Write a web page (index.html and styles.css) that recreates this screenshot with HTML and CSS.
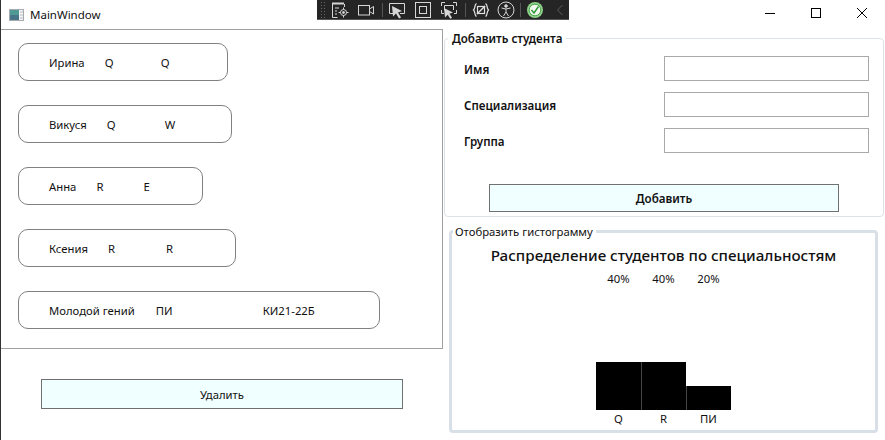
FILE: index.html
```html
<!DOCTYPE html>
<html lang="ru">
<head>
<meta charset="utf-8">
<title>MainWindow</title>
<link rel="stylesheet" href="styles.css">
</head>
<body>
<div class="window">
  <header class="titlebar">
    <div class="title-left">
      <svg class="app-icon" width="15" height="12" viewBox="0 0 15 12"><rect x="0.5" y="0.500" width="14" height="11" fill="#f4f5f6" stroke="#a6abb0"/><rect x="1" y="1" width="9" height="10" fill="#4f9a94"/><rect x="1" y="6" width="9" height="5" fill="#4a7488"/><path d="M11 3h3M11 6h3M11 9h3" stroke="#b5babe"/></svg>
      <span>MainWindow</span>
    </div>
    <div class="debug-bar">
      <span class="grip"></span>
      <svg class="ico m5" width="18" height="18" viewBox="0 0 18 18" fill="none" stroke="#d6d6d6"><path d="M1 2.500h12" stroke-width="2"/><path d="M1.500 3v13.500h5M4 7h4M4 10h2M4 13h2M13.500 3v3"/><circle cx="12.500" cy="11.500" r="3"/><circle cx="12.500" cy="11.500" r="1" fill="#d6d6d6"/><path d="M12.500 6.500v2M12.500 14.500v2M7.500 11.500h2M15.500 11.500h2"/></svg>
      <svg class="ico m8" width="18" height="18" viewBox="0 0 18 18" fill="none" stroke="#d6d6d6"><rect x="1.500" y="4.500" width="11" height="9.500"/><path d="M12.500 8l4-2.500v7.500l-4-2.500"/></svg>
      <span class="sep m7"></span>
      <svg class="ico m5" width="18" height="18" viewBox="0 0 18 18" fill="none" stroke="#d6d6d6"><path d="M5 12.500H1.500v-10h15v10H12"/><path d="M4 5l10 5-4 1.500 3 5-2 1-3-5-3 3z" fill="#d6d6d6" stroke="none"/></svg>
      <svg class="ico m8" width="18" height="18" viewBox="0 0 18 18" fill="none" stroke="#d6d6d6"><rect x="1.500" y="1.500" width="15" height="15"/><rect x="5.500" y="5.500" width="7" height="7"/></svg>
      <svg class="ico m8" width="18" height="18" viewBox="0 0 18 18" fill="none" stroke="#d6d6d6"><path d="M1.500 5V1.500H5M13 1.500h3.500V5M1.500 9v3.500H4M16.500 9v3.500H14M4.500 9V4.500h9V9"/><path d="M4 7l9 4.500-3.500 1.200 2.500 4-1.800 1-2.500-4-2.700 2.800z" fill="#d6d6d6" stroke="none"/></svg>
      <span class="sep m7"></span>
      <svg class="ico m6" width="18" height="18" viewBox="0 0 18 18" fill="none" stroke="#e0e0e0" stroke-width="1.200"><path d="M4.500 2.500C2 4 3.800 7 1.500 9 3.800 11 2 14 4.500 15.500"/><path d="M13.500 2.500C16 4 14.200 7 16.500 9 14.200 11 16 14 13.500 15.500"/><rect x="5.500" y="5.500" width="7" height="7"/><path d="M5 13l8-8" stroke-width="1.500"/></svg>
      <svg class="ico m7" width="18" height="18" viewBox="0 0 18 18" fill="none" stroke="#d6d6d6"><circle cx="9" cy="9" r="8"/><circle cx="9" cy="5" r="1.300" fill="#d6d6d6"/><path d="M4.500 7l4.500 1 4.500-1M9 8v3l-2.500 4M9 11l2.500 4"/></svg>
      <span class="sep m5"></span>
      <svg class="ico m5" width="18" height="18" viewBox="0 0 18 18"><circle cx="9" cy="9" r="8" fill="#8fd08a"/><circle cx="9" cy="9" r="5.800" fill="#f2f8f0" stroke="#4aa84a"/><path d="M5.500 9l2.500 3 4.500-6.500" fill="none" stroke="#2f9a38" stroke-width="1.500"/></svg>
      <svg class="chev" width="8" height="12" viewBox="0 0 8 12" fill="none" stroke="#5c5c5c"><path d="M6.500 1L1.500 6l5 5"/></svg>
    </div>
    <div class="caption">
      <svg class="cap" width="12" height="12" viewBox="0 0 12 12" stroke="#000" fill="none"><path d="M1 6.500h10"/></svg>
      <svg class="cap" width="12" height="12" viewBox="0 0 12 12" stroke="#000" fill="none"><rect x="1.500" y="1.500" width="9" height="9"/></svg>
      <svg class="cap" width="12" height="12" viewBox="0 0 12 12" stroke="#000" fill="none"><path d="M1 1l10 10M11 1L1 11"/></svg>
    </div>
  </header>
  <main class="content">
    <section class="left">
      <div class="list">
        <div class="student s1"><span class="c-name">Ирина</span><span class="c-spec">Q</span><span>Q</span></div>
        <div class="student s2"><span class="c-name">Викуся</span><span class="c-spec">Q</span><span>W</span></div>
        <div class="student s3"><span class="c-name">Анна</span><span class="c-spec">R</span><span>E</span></div>
        <div class="student s4"><span class="c-name">Ксения</span><span class="c-spec">R</span><span>R</span></div>
        <div class="student s5"><span class="c-name">Молодой гений</span><span class="c-spec">ПИ</span><span>КИ21-22Б</span></div>
      </div>
      <button class="btn delete" type="button">Удалить</button>
    </section>
    <section class="right">
      <fieldset class="add">
        <legend>Добавить студента</legend>
        <div class="row"><label>Имя</label><input type="text"></div>
        <div class="row"><label>Специализация</label><input type="text"></div>
        <div class="row"><label>Группа</label><input type="text"></div>
        <button class="btn add-btn" type="button">Добавить</button>
      </fieldset>
      <fieldset class="hist">
        <legend>Отобразить гистограмму</legend>
        <h2>Распределение студентов по специальностям</h2>
        <div class="pcts"><span>40%</span><span>40%</span><span>20%</span></div>
        <div class="bars">
          <div class="bar tall"></div><div class="bar tall"></div><div class="bar short"></div>
        </div>
        <div class="labels"><span>Q</span><span>R</span><span>ПИ</span></div>
      </fieldset>
    </section>
  </main>
</div>
</body>
</html>
```
FILE: styles.css
```css
* { box-sizing: border-box; }
html, body { margin: 0; padding: 0; background: #fff; }
body { width: 885px; height: 440px; overflow: hidden; font-family: "Noto Sans", "Open Sans", sans-serif; font-size: 11.3px; color: #111; }
.window { width: 885px; height: 440px; display: flex; flex-direction: column; border-left: 1px solid #333; }
.titlebar { height: 29px; display: flex; align-items: flex-start; flex: none; }
.title-left { display: flex; align-items: center; gap: 6px; padding: 2px 0 0 8px; font-size: 11.5px; height: 27px; width: 316px; }
.app-icon { flex: none; }
.debug-bar { width: 252px; height: 20px; background: #252526; border-bottom: 1px solid #555; display: flex; align-items: center; padding-left: 3px; }
.grip { width: 6px; height: 18px; background-image: radial-gradient(#666 0.6px, transparent 0.7px); background-size: 3px 3px; }
.sep { width: 1px; height: 14px; background: #555; flex: none; }
.ico { flex: none; }
.m5 { margin-left: 5px; } .m6 { margin-left: 6px; } .m7 { margin-left: 7px; } .m8 { margin-left: 8px; }
.chev { flex: none; margin-left: 12px; }
.caption { margin-left: auto; display: flex; gap: 34px; padding: 7px 17px 0 0; }
.cap { display: block; }
.content { flex: 1; display: flex; min-height: 0; }
.left { width: 442px; flex: none; display: flex; flex-direction: column; }
.list { height: 320px; border: 1px solid #a0a0a0; border-left: 0; padding: 13px 0 0 17px; display: flex; flex-direction: column; gap: 24px; }
.student { height: 38px; border: 1px solid #808080; border-radius: 10px; display: flex; align-items: center; padding-left: 30px; }
.s1 { width: 210px; } .s2 { width: 214px; } .s3 { width: 185px; } .s4 { width: 218px; } .s5 { width: 362px; }
.c-name { margin-right: 20px; }
.s5 .c-name { margin-right: 21px; }
.s1 .c-spec { width: 56px; } .s2 .c-spec { width: 58px; } .s3 .c-spec { width: 47px; } .s4 .c-spec { width: 58px; } .s5 .c-spec { width: 107px; }
.btn { font: inherit; color: #111; background: #f0ffff; border: 1px solid #707070; display: block; padding: 0; }
.delete { width: 362px; height: 30px; margin: 30px 0 0 40px; }
.right { flex: 1; display: flex; flex-direction: column; padding-left: 1px; padding-right: 1px; }
fieldset { margin: 0; min-width: 0; }
.add { height: 186px; margin-top: 2px; border: 1px solid #dde2e6; border-radius: 4px; padding: 4px 0 0 0; display: flex; flex-direction: column; flex: none; }
.add legend { font-weight: 600; font-size: 11.6px; margin-left: 3px; padding: 0 3px 0 4px; }
.row { display: flex; justify-content: space-between; align-items: center; height: 36px; padding: 0 14px 0 19px; font-weight: 600; font-size: 11.6px; }
.row label { padding-top: 3px; }
.row input { width: 205px; height: 25px; border: 1px solid #a9a9a9; background: #fff; }
.add-btn { width: 350px; height: 28px; margin: 26px 0 0 44px; font-weight: 600; font-size: 11.6px; }
.hist { flex: none; height: 209px; margin: 7px 6px 0 5px; border: 3px solid #d9dfe7; border-radius: 4px; padding: 0; display: flex; flex-direction: column; align-items: center; }
.hist legend { margin-left: 1px; padding: 0 3px 0 2px; }
.hist h2 { margin: 6px 0 0; font-size: 15.2px; font-weight: 500; line-height: 20px; }
.pcts { display: flex; width: 135px; margin-top: 6px; line-height: 16px; }
.pcts span, .labels span { width: 45px; text-align: center; }
.bars { height: 123px; width: 135px; display: flex; align-items: flex-end; flex: none; }
.bar { width: 45px; background: #000; }
.bar + .bar { border-left: 1px solid #444; }
.tall { height: 48px; } .short { height: 24px; }
.labels { display: flex; width: 135px; line-height: 18px; }
```
